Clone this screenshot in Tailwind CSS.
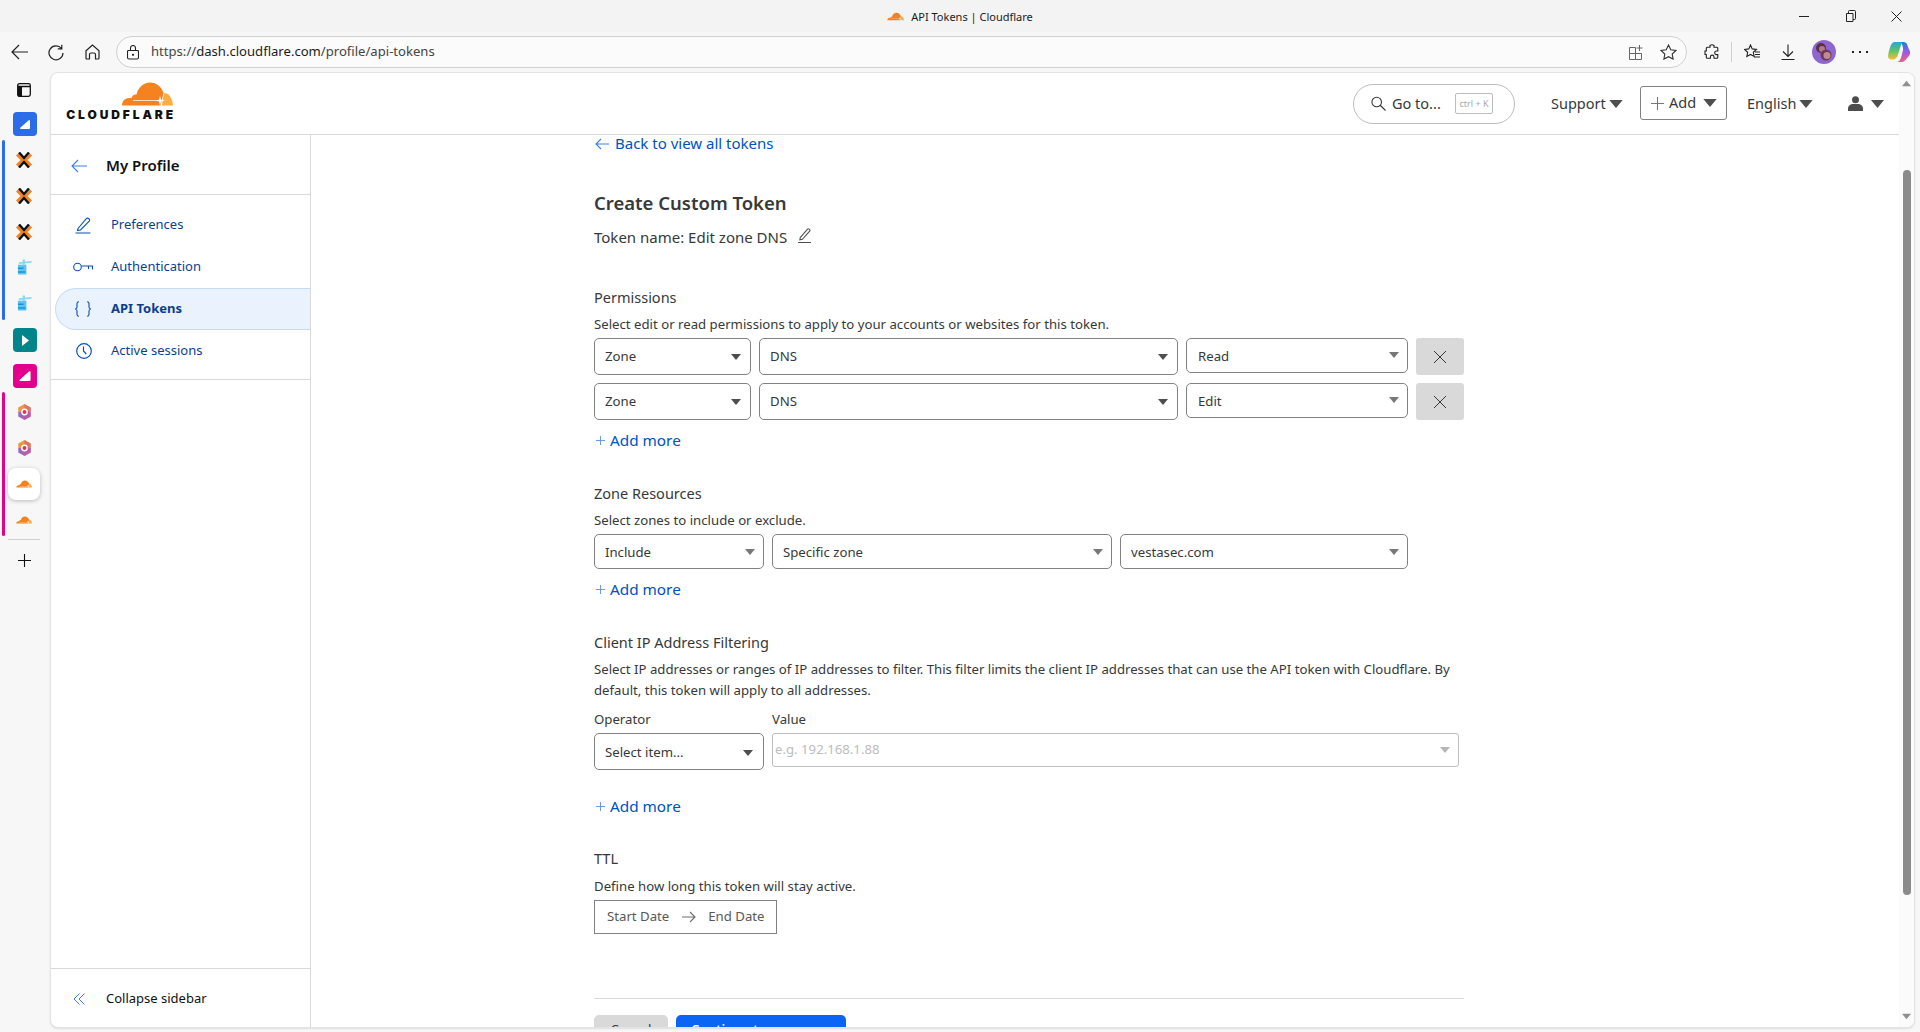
<!DOCTYPE html>
<html lang="en">
<head>
  <meta charset="UTF-8" />
  <title>API Tokens | Cloudflare</title>
  <script src="https://cdn.jsdelivr.net/npm/@tailwindcss/browser@4"></script>
</head>
<body class="w-[1920px] h-[1032px] overflow-hidden bg-[#f7f7f7] font-['Noto_Sans',sans-serif] text-[#313131]">

  <svg class="hidden">
    <symbol id="cf-cloud" viewBox="0 0 52 24">
      <path fill="#f6821f" d="M1 23.5C1 19 4 16 8.5 16c.8 0 1.5.1 2 .3.6-3 2.700-4.300 5-3.800C17 5.500 22.500 .5 29 .5c6.500 0 11.700 4.500 13.500 10.500L39.500 23.500Z" />
      <path fill="#fbad41" d="M41 23.500c.5-4 1-9 2.500-12.500C48 11 51.500 16.500 52 23.500Z" />
      <path fill="#fff" d="M12 18.200h23l3-.4 1-4 1 4 4 .8-4 .8-1 4-1-4-3-.4H12Z" />
    </symbol>
    <symbol id="px-x" viewBox="0 0 16 16">
      <path fill="none" stroke="#f58220" stroke-width="3" d="M1 2.500 6.500 8 1 13.500M15 2.500 9.500 8 15 13.500" />
      <path fill="none" stroke="#111" stroke-width="2.500" d="M3 .5 8 6 13 .5M3 15.500 8 10 13 15.500" />
    </symbol>
    <symbol id="crane" viewBox="0 0 16 18">
      <path fill="#5cc4f0" d="M1 6h9v10.500H1z" />
      <path fill="#8fd6f4" d="M6 .5h2.500V6H6zM2 3.500 15.500 2v1.800L2 5.200z" />
      <path fill="#1c93d6" d="M1 9h6v1.500H1zM1 13h8v1.500H1z" />
    </symbol>
    <symbol id="hexa" viewBox="0 0 16 18">
      <path fill="#e89a3c" d="M8 0 15 4v5H1V4Z" />
      <path fill="#a066b8" d="M15 9v5l-7 4-7-4V9Z" />
      <path fill="#d4568a" d="M8 0 15 4v10L8 18Z" opacity=".55" />
      <circle cx="8" cy="9" r="3.800" fill="#fff" />
      <circle cx="8" cy="9" r="2.200" fill="#e5344b" />
    </symbol>
    <symbol id="caret" viewBox="0 0 10 6">
      <path fill="currentColor" d="M0 0h10L5 6Z" />
    </symbol>
    <symbol id="x-mark" viewBox="0 0 14 14">
      <path fill="none" stroke="#36393a" stroke-width="1" d="M1 1 13 13M13 1 1 13" />
    </symbol>
    <symbol id="plus" viewBox="0 0 12 12">
      <path fill="none" stroke="#6b9be0" stroke-width="1.100" d="M6 1v10M1 6h10" />
    </symbol>
  </svg>

  <!-- Title bar -->
  <div class="h-8 bg-[#f3f3f3] grid grid-cols-[1fr_auto_1fr] items-center text-[11px] text-[#1b1b1b]">
    <div></div>
    <div class="flex items-center gap-[7px] pt-[2px]">
      <svg class="w-[17px] h-[9px] mb-[2px]"><use href="#cf-cloud" /></svg>
      <span>API Tokens | Cloudflare</span>
    </div>
    <div class="flex justify-end items-center">
      <svg class="w-[10px] h-[10px] mr-[37px]" viewBox="0 0 10 10"><path stroke="#222" d="M0 5.500h10" /></svg>
      <svg class="w-[10px] h-[12px] mr-[35px]" viewBox="0 0 10 12"><path fill="none" stroke="#222" d="M.5 3.500h6.500v8H.5zM2.500 3.500V1.500q0-1 1-1H8.500q1 0 1 1V8.500q0 1-1 1H7" /></svg>
      <svg class="w-[11px] h-[11px] mr-[18px]" viewBox="0 0 11 11"><path stroke="#222" d="M.5 .5l10 10M10.500 .5l-10 10" /></svg>
    </div>
  </div>

  <!-- Browser toolbar -->
  <div class="h-10 flex items-center bg-[#f7f7f7]">
    <svg class="w-[18px] h-[16px] ml-[11px]" viewBox="0 0 18 16"><path fill="none" stroke="#222" stroke-width="1.200" d="M17 8H1.500M8 1 1 8l7 7" /></svg>
    <svg class="w-[16px] h-[17px] ml-[19px]" viewBox="0 0 16 17"><path fill="none" stroke="#222" stroke-width="1.200" d="M13.500 4.500A7 7 0 1 0 15 9M13.800 .8v4H9.800" /></svg>
    <svg class="w-[15px] h-[16px] ml-[21px]" viewBox="0 0 15 16"><path fill="none" stroke="#222" stroke-width="1.200" d="M1 6.800 7.500 1 14 6.800V14q0 1-1 1h-2.500v-4.500q0-1.500-1.500-1.500H6q-1.500 0-1.500 1.500V15H2q-1 0-1-1Z" /></svg>
    <div class="ml-[16px] w-[1571px] h-8 rounded-full border border-[#d0d0d0] bg-[#fbfbfb] flex items-center pl-[10px]">
      <svg class="w-[12px] h-[15px]" viewBox="0 0 12 15"><path fill="none" stroke="#222" stroke-width="1.100" d="M1.500 5.500h9q1 0 1 1v6q0 1.500-1.500 1.500H2q-1.500 0-1.500-1.500v-6q0-1 1-1ZM3.500 5.500V3a2.500 2.500 0 0 1 5 0v2.500" /><circle cx="6" cy="9.800" r="1.100" fill="#222" /></svg>
      <span class="ml-[12px] text-[13.100px] text-[#444]">https://<span class="text-[#1b1b1b]">dash.cloudflare.com</span>/profile/api-tokens</span>
      <div class="flex-1"></div>
      <svg class="w-[15px] h-[17px]" viewBox="0 0 15 17"><path fill="none" stroke="#666" d="M.5 3.500h6v6h-6zM.5 9.500h6v6h-6zM6.500 9.500h6v6h-6zM10.500 1v6M7.500 4h6" /></svg>
      <svg class="w-[17px] h-[16px] ml-[16px] mr-[9px]" viewBox="0 0 17 16"><path fill="none" stroke="#333" stroke-width="1.100" d="M8.500 1l2.300 4.700 5.200.7-3.800 3.600.9 5.100-4.600-2.400-4.600 2.400.9-5.100L1 6.400l5.200-.7Z" /></svg>
    </div>
    <svg class="w-[16px] h-[16px] ml-[17px]" viewBox="0 0 16 16"><path fill="none" stroke="#222" stroke-width="1.100" d="M6 1.500q2-1.500 4 0v1.800h2.800q1 0 1 1V7h-1.300a1.800 1.800 0 0 0 0 3.600h1.300v2.600q0 1-1 1H10v-1.300a1.800 1.800 0 0 0-3.600 0v1.300H3.300q-1 0-1-1V10.500H1V7h1.300V4.300q0-1 1-1H6Z" /></svg>
    <div class="w-px h-[20px] bg-[#d0d0d0] ml-[11px]"></div>
    <svg class="w-[17px] h-[16px] ml-[12px]" viewBox="0 0 17 16"><path fill="none" stroke="#222" stroke-width="1.100" d="M6.500 1l1.700 3.900 4.300.5-3.200 2.900.9 4.200-3.700-2.100-3.700 2.100.9-4.200L.5 5.400l4.300-.5ZM11 8h5M11 10.500h5M10 13h6" /></svg>
    <svg class="w-[14px] h-[16px] ml-[20px]" viewBox="0 0 14 16"><path fill="none" stroke="#222" stroke-width="1.100" d="M7 .5V12M2 7.500l5 5 5-5M.5 15.500h13" /></svg>
    <svg class="w-6 h-6 ml-[17px]" viewBox="0 0 24 24">
      <circle cx="12" cy="12" r="12" fill="#8f66d0" />
      <circle cx="9" cy="8" r="5" fill="#5c2f4a" />
      <circle cx="10" cy="9" r="3" fill="#b57a8a" />
      <circle cx="14" cy="15" r="5.500" fill="#6b3a55" />
      <circle cx="15" cy="15.500" r="3.500" fill="#c08a90" />
    </svg>
    <div class="ml-[16px] w-[16px] flex justify-between">
      <span class="w-[2px] h-[2px] bg-[#222]"></span><span class="w-[2px] h-[2px] bg-[#222]"></span><span class="w-[2px] h-[2px] bg-[#222]"></span>
    </div>
    <svg class="w-[22px] h-[22px] ml-[20px]" viewBox="0 0 22 22">
      <defs>
        <linearGradient id="cp1" x1="0" y1="0" x2="0" y2="1"><stop offset="0" stop-color="#2aa5e0" /><stop offset=".5" stop-color="#5ec26a" /><stop offset="1" stop-color="#f2c230" /></linearGradient>
        <linearGradient id="cp2" x1="0" y1="0" x2="0" y2="1"><stop offset="0" stop-color="#1f7de0" /><stop offset=".5" stop-color="#9a5be0" /><stop offset="1" stop-color="#f0647e" /></linearGradient>
      </defs>
      <path fill="url(#cp1)" d="M7 1h7L9.500 15q-1 3-3.500 3.500H3q-3-.5-3-3.500.5-4 2-8.500C3 3 4.500 1 7 1Z" />
      <path fill="url(#cp2)" d="M13 1h3q3 .5 3.500 3.500.5 2 2.500 6 .5 3.500-2 5.500-2 3-5 5H9q3-1 4-4l2-8q.5-3-2-8Z" />
    </svg>
  </div>

  <div class="flex h-[956px]">

    <!-- Vertical tabs -->
    <div class="w-[50px] shrink-0 relative flex flex-col items-center pl-[1px] pr-[3px]">
      <div class="absolute left-[2px] top-[68px] w-[3px] h-[180px] rounded-full bg-[#2b6de8]"></div>
      <div class="absolute left-[2px] top-[320px] w-[3px] h-[144px] rounded-full bg-[#e3008c]"></div>
      <svg class="w-[14px] h-[14px] mt-[11px]" viewBox="0 0 14 14"><path fill="none" stroke="#111" stroke-width="1.300" d="M2.500.7h9q1.800 0 1.800 1.800v9q0 1.800-1.800 1.800h-9Q.7 13.300.7 11.500v-9Q.7.7 2.500.7ZM.7 3.500h12.600" /><path fill="#111" d="M1 3.500h4v10H1z" /></svg>
      <div class="w-6 h-6 mt-[15px] ml-[2px] rounded-[4px] bg-[#2b6de8] flex items-center justify-center">
        <svg class="w-[10px] h-[9px]" viewBox="0 0 10 9"><path fill="#fff" d="M9 0q1 0 1 1v7q0 1-1 1H1Q0 9 0 8Z" /></svg>
      </div>
      <svg class="w-[16px] h-[16px] mt-[16px]"><use href="#px-x" /></svg>
      <svg class="w-[16px] h-[16px] mt-[20px]"><use href="#px-x" /></svg>
      <svg class="w-[16px] h-[16px] mt-[20px]"><use href="#px-x" /></svg>
      <svg class="w-[15px] h-[17px] mt-[19px]"><use href="#crane" /></svg>
      <svg class="w-[15px] h-[17px] mt-[19px]"><use href="#crane" /></svg>
      <div class="w-6 h-6 mt-[16px] ml-[2px] rounded-[4px] bg-[#00858a] flex items-center justify-center">
        <svg class="w-[7px] h-[11px]" viewBox="0 0 7 11"><path fill="#fff" d="M0 0l7 5.500L0 11Z" /></svg>
      </div>
      <div class="w-6 h-6 mt-[12px] ml-[2px] rounded-[4px] bg-[#e3008c] flex items-center justify-center">
        <svg class="w-[12px] h-[10px]" viewBox="0 0 10 9"><path fill="#fff" d="M9 0q1 0 1 1v7q0 1-1 1H1Q0 9 0 8Z" /></svg>
      </div>
      <svg class="w-[15px] h-[16px] mt-[16px]"><use href="#hexa" /></svg>
      <svg class="w-[15px] h-[16px] mt-[20px]"><use href="#hexa" /></svg>
      <div class="w-8 h-8 mt-[12px] rounded-lg bg-white shadow-[0_1px_4px_rgba(0,0,0,0.25)] flex items-center justify-center">
        <svg class="w-[16px] h-[8px]"><use href="#cf-cloud" /></svg>
      </div>
      <svg class="w-[16px] h-[8px] mt-[16px]"><use href="#cf-cloud" /></svg>
      <div class="w-8 h-px bg-[#d0d0d0] mt-[15px]"></div>
      <svg class="w-[13px] h-[13px] mt-[14px]" viewBox="0 0 13 13"><path stroke="#111" stroke-width="1.100" d="M6.500 0v13M0 6.500h13" /></svg>
    </div>

    <!-- Page -->
    <div class="w-[1865px] h-[956px] rounded-lg bg-white border border-[#e3e3e3] shadow-[0_1px_2px_rgba(0,0,0,0.1)] overflow-hidden flex">
      <div class="w-[1849px] flex flex-col">

        <!-- Page header -->
        <header class="h-[62px] shrink-0 border-b border-[#d9d9d9] flex items-center text-[14.500px] text-[#36393a]">
          <div class="ml-[14px] w-[111px] flex flex-col items-end mt-[-5px]">
            <svg class="w-[52px] h-[24px] mr-[3px]"><use href="#cf-cloud" /></svg>
            <span class="font-['Inter',sans-serif] font-black text-[12px] leading-[13px] tracking-[2.900px] text-[#111] mt-[2px]">CLOUDFLARE</span>
          </div>
          <div class="flex-1"></div>
          <div class="w-[162px] h-10 rounded-full border border-[#bdbdbd] flex items-center pl-[17px]">
            <svg class="w-[15px] h-[15px]" viewBox="0 0 15 15"><path fill="none" stroke="#36393a" stroke-width="1.100" d="M9.500 9.500 14.500 14.500M10.500 6a4.800 4.800 0 1 1-9.600 0 4.800 4.800 0 0 1 9.600 0Z" /></svg>
            <span class="ml-[6px] w-[63px]">Go to...</span>
            <span class="w-[38px] h-[21px] border border-[#bdbdbd] rounded-[2px] flex items-center justify-center text-[9px] text-[#a8a8a8]">ctrl + K</span>
          </div>
          <span class="ml-[36px] w-[55px]">Support</span>
          <svg class="w-[14px] h-[8px] ml-[3px] text-[#4e4e4e]"><use href="#caret" /></svg>
          <div class="ml-[17px] mb-[1px] w-[87px] h-[34px] border border-[#808285] rounded-[3px] flex items-center pl-[10px]">
            <svg class="w-[13px] h-[13px]" viewBox="0 0 13 13"><path stroke="#777" stroke-width="1.100" d="M6.500 0v13M0 6.500h13" /></svg>
            <span class="ml-[5px] w-[34px]">Add</span>
            <svg class="w-[14px] h-[8px] text-[#4e4e4e]"><use href="#caret" /></svg>
          </div>
          <span class="ml-[20px] w-[48px]">English</span>
          <svg class="w-[14px] h-[8px] ml-[4px] text-[#4e4e4e]"><use href="#caret" /></svg>
          <svg class="w-[15px] h-[15px] ml-[35px]" viewBox="0 0 15 15"><circle cx="7.500" cy="3.800" r="3.500" fill="#4e4e4e" /><path fill="#4e4e4e" d="M0 15v-2.500q0-3.500 4-4.500h7q4 1 4 4.500V15Z" /></svg>
          <svg class="w-[13px] h-[8px] ml-[8px] text-[#4e4e4e]"><use href="#caret" /></svg>
          <div class="w-[15px]"></div>
        </header>

        <div class="flex-1 flex min-h-0">

          <!-- Sidebar -->
          <aside class="w-[260px] shrink-0 border-r border-[#d9d9d9] flex flex-col">
            <div class="h-[60px] border-b border-[#d9d9d9] flex items-center pt-[2px]">
              <svg class="w-[16px] h-[14px] ml-[20px]" viewBox="0 0 16 14"><path fill="none" stroke="#3f7fdc" stroke-width="1.100" d="M16 7H1M7 1 1 7l6 6" /></svg>
              <span class="ml-[19px] text-[15px] font-semibold text-[#111]">My Profile</span>
            </div>
            <div class="pt-[9px] h-[185px] border-b border-[#d9d9d9] text-[13px] text-[#0a3f8f]">
              <div class="h-[42px] flex items-center pl-[24px]">
                <svg class="w-[16px] h-[17px]" viewBox="0 0 16 17"><path fill="none" stroke="#0a4fb5" stroke-width="1.100" d="M3 11.500 11.500 1.500q1-.8 2 0l.7.700q.8 1 0 2L5.500 13l-3 .5ZM.5 16h15" /></svg>
                <span class="ml-[20px]">Preferences</span>
              </div>
              <div class="h-[42px] flex items-center pl-[22px]">
                <svg class="w-[20px] h-[10px]" viewBox="0 0 20 10"><circle cx="4.500" cy="5" r="3.800" fill="none" stroke="#0a4fb5" stroke-width="1.100" /><path fill="none" stroke="#0a4fb5" stroke-width="1.100" d="M8.300 4H19.500v3.500M15.500 4v3" /></svg>
                <span class="ml-[18px]">Authentication</span>
              </div>
              <div class="h-[42px] ml-[4px] flex items-center pl-[19px] rounded-l-[21px] border border-r-0 border-[#c5daf7] bg-[#e9f2fd] font-bold">
                <svg class="w-[16px] h-[16px]" viewBox="0 0 16 16"><path fill="none" stroke="#0a4fb5" stroke-width="1.100" d="M4 .7Q2 .7 2 2.500V6q0 1.500-1.500 2Q2 8.500 2 10v3.500q0 1.800 2 1.800M12 .7q2 0 2 1.800V6q0 1.500 1.500 2Q14 8.500 14 10v3.500q0 1.800-2 1.800" /></svg>
                <span class="ml-[20px]">API Tokens</span>
              </div>
              <div class="h-[42px] flex items-center pl-[25px]">
                <svg class="w-[16px] h-[16px]" viewBox="0 0 16 16"><circle cx="8" cy="8" r="7.300" fill="none" stroke="#0a4fb5" stroke-width="1.200" /><path fill="none" stroke="#0a4fb5" stroke-width="1.200" d="M7.500 3.500V8l2.800 3" /></svg>
                <span class="ml-[19px]">Active sessions</span>
              </div>
            </div>
            <div class="flex-1"></div>
            <div class="h-[59px] border-t border-[#d9d9d9] flex items-center pt-[2px]">
              <svg class="w-[12px] h-[12px] ml-[22px]" viewBox="0 0 12 12"><path fill="none" stroke="#3f7fdc" stroke-width="1" d="M6.500.5 1 6l5.500 5.500M11.500.5 6 6l5.500 5.500" /></svg>
              <span class="ml-[21px] text-[13px] text-[#111]">Collapse sidebar</span>
            </div>
          </aside>

          <!-- Form -->
          <main class="pl-[283px] w-[1153px] overflow-hidden text-[13.200px] text-[#36393a]">
            <a class="h-4 flex items-center text-[15px] leading-4 text-[#0051c3]">
              <svg class="w-[14px] h-[12px] ml-[1px] mt-[2px]" viewBox="0 0 14 12"><path fill="none" stroke="#3f7fdc" stroke-width="1.100" d="M14 6H1M6 1 1 6l5 5" /></svg>
              <span class="ml-[6px]">Back to view all tokens</span>
            </a>

            <h1 class="mt-[38px] text-[18.500px] leading-[28px] font-semibold">Create Custom Token</h1>
            <div class="mt-[10px] h-5 flex items-center text-[15px] leading-5">
              <span>Token name: Edit zone DNS</span>
              <svg class="w-[13px] h-[15px] ml-[11px] mb-[4px]" viewBox="0 0 12 14"><path fill="none" stroke="#4e4e4e" stroke-width="1" d="M2 9 8.800 1q.8-.7 1.500 0l.5.500q.6.700 0 1.500L4 10.500l-2.300.5ZM0 13.500h12" /></svg>
            </div>

            <h2 class="mt-[40px] text-[14.500px] leading-5">Permissions</h2>
            <p class="mt-[7px] leading-5">Select edit or read permissions to apply to your accounts or websites for this token.</p>
            <div class="mt-[4px] flex gap-2 items-start">
              <div class="w-[157px] h-[37px] border border-[#808285] rounded-[5px] flex items-center justify-between pl-[10px] pr-[9px] pt-[1px]"><span>Zone</span><svg class="w-[10px] h-[6px] text-[#4e4e4e]"><use href="#caret" /></svg></div>
              <div class="w-[419px] h-[37px] border border-[#808285] rounded-[5px] flex items-center justify-between pl-[10px] pr-[9px] pt-[1px]"><span>DNS</span><svg class="w-[10px] h-[6px] text-[#4e4e4e]"><use href="#caret" /></svg></div>
              <div class="w-[222px] h-[35px] border border-[#808285] rounded-[5px] flex items-center justify-between pl-[11px] pr-[8px] pt-[2px]"><span>Read</span><svg class="w-[10px] h-[6px] text-[#777] mb-[3px]"><use href="#caret" /></svg></div>
              <div class="w-[48px] h-[37px] rounded-[3px] bg-[#d9d9d9] flex items-center justify-center"><svg class="w-[14px] h-[14px]"><use href="#x-mark" /></svg></div>
            </div>
            <div class="mt-[8px] flex gap-2 items-start">
              <div class="w-[157px] h-[37px] border border-[#808285] rounded-[5px] flex items-center justify-between pl-[10px] pr-[9px] pt-[1px]"><span>Zone</span><svg class="w-[10px] h-[6px] text-[#4e4e4e]"><use href="#caret" /></svg></div>
              <div class="w-[419px] h-[37px] border border-[#808285] rounded-[5px] flex items-center justify-between pl-[10px] pr-[9px] pt-[1px]"><span>DNS</span><svg class="w-[10px] h-[6px] text-[#4e4e4e]"><use href="#caret" /></svg></div>
              <div class="w-[222px] h-[35px] border border-[#808285] rounded-[5px] flex items-center justify-between pl-[11px] pr-[8px] pt-[2px]"><span>Edit</span><svg class="w-[10px] h-[6px] text-[#777] mb-[3px]"><use href="#caret" /></svg></div>
              <div class="w-[48px] h-[37px] rounded-[3px] bg-[#d9d9d9] flex items-center justify-center"><svg class="w-[14px] h-[14px]"><use href="#x-mark" /></svg></div>
            </div>
            <a class="mt-[10px] h-5 flex items-center text-[15.300px] text-[#0051c3]">
              <svg class="w-[11px] h-[11px] ml-[1px]"><use href="#plus" /></svg>
              <span class="ml-[4px]">Add more</span>
            </a>

            <h2 class="mt-[33px] text-[14.500px] leading-5">Zone Resources</h2>
            <p class="mt-[7px] leading-5">Select zones to include or exclude.</p>
            <div class="mt-[4px] flex gap-2">
              <div class="w-[170px] h-[35px] border border-[#808285] rounded-[5px] flex items-center justify-between pl-[10px] pr-[8px] pt-[2px]"><span>Include</span><svg class="w-[10px] h-[6px] text-[#777] mb-[2px]"><use href="#caret" /></svg></div>
              <div class="w-[340px] h-[35px] border border-[#808285] rounded-[5px] flex items-center justify-between pl-[10px] pr-[8px] pt-[2px]"><span>Specific zone</span><svg class="w-[10px] h-[6px] text-[#777] mb-[2px]"><use href="#caret" /></svg></div>
              <div class="w-[288px] h-[35px] border border-[#808285] rounded-[5px] flex items-center justify-between pl-[10px] pr-[8px] pt-[2px]"><span>vestasec.com</span><svg class="w-[10px] h-[6px] text-[#777] mb-[2px]"><use href="#caret" /></svg></div>
            </div>
            <a class="mt-[10px] h-5 flex items-center text-[15.300px] text-[#0051c3]">
              <svg class="w-[11px] h-[11px] ml-[1px]"><use href="#plus" /></svg>
              <span class="ml-[4px]">Add more</span>
            </a>

            <h2 class="mt-[33px] text-[14.500px] leading-5">Client IP Address Filtering</h2>
            <p class="mt-[7px] leading-[21px] w-[870px]">Select IP addresses or ranges of IP addresses to filter. This filter limits the client IP addresses that can use the API token with Cloudflare. By default, this token will apply to all addresses.</p>
            <div class="mt-[9px] flex gap-2 items-start">
              <div class="w-[170px]">
                <label class="block leading-[18px]">Operator</label>
                <div class="mt-[5px] h-[37px] border border-[#808285] rounded-[5px] flex items-center justify-between pl-[10px] pr-[10px] pt-[2px]"><span>Select item...</span><svg class="w-[10px] h-[6px] text-[#4e4e4e]"><use href="#caret" /></svg></div>
              </div>
              <div class="w-[687px]">
                <label class="block leading-[18px]">Value</label>
                <div class="mt-[5px] h-[34px] border border-[#bdbdbd] rounded-[3px] flex items-center justify-between pl-[2px] pr-[8px] text-[#bdbdbd]"><span>e.g. 192.168.1.88</span><svg class="w-[10px] h-[6px] text-[#b5b5b5]"><use href="#caret" /></svg></div>
              </div>
            </div>
            <a class="mt-[26px] h-5 flex items-center text-[15.300px] text-[#0051c3]">
              <svg class="w-[11px] h-[11px] ml-[1px]"><use href="#plus" /></svg>
              <span class="ml-[4px]">Add more</span>
            </a>

            <h2 class="mt-[32px] text-[14.500px] leading-5">TTL</h2>
            <p class="mt-[8px] leading-5">Define how long this token will stay active.</p>
            <div class="mt-[4px] w-[183px] h-[34px] border border-[#808285] flex items-center pl-[12px] text-[#595959]">
              <span>Start Date</span>
              <svg class="w-[14px] h-[12px] ml-[13px]" viewBox="0 0 14 12"><path fill="none" stroke="#6f6f6f" stroke-width="1.100" d="M0 6h13M8 1l5 5-5 5" /></svg>
              <span class="ml-[12px]">End Date</span>
            </div>

            <div class="mt-[64px] w-[870px] h-px bg-[#d9d9d9]"></div>
            <div class="mt-[16px] flex gap-2">
              <button class="w-[74px] h-[38px] rounded-[5px] bg-[#d9d9d9] text-[#36393a] pb-[8px]">Cancel</button>
              <button class="w-[170px] h-[38px] rounded-[5px] bg-[#0a65f5] text-white font-semibold pb-[8px]">Continue to summary</button>
            </div>
          </main>
        </div>
      </div>

      <!-- Scrollbar -->
      <div class="w-[15px] bg-[#fbfbfb] flex flex-col items-center pt-[7px]">
        <svg class="w-[9px] h-[7px] text-[#8f8f8f]" viewBox="0 0 10 6"><path fill="currentColor" d="M0 6h10L5 0Z" /></svg>
        <div class="w-[8px] h-[725px] mt-[83px] rounded-full bg-[#8b8b8b]"></div>
        <div class="flex-1"></div>
        <svg class="w-[9px] h-[7px] mb-[7px] text-[#8f8f8f]" viewBox="0 0 10 6"><path fill="currentColor" d="M0 0h10L5 6Z" /></svg>
      </div>
    </div>
  </div>

</body>
</html>
